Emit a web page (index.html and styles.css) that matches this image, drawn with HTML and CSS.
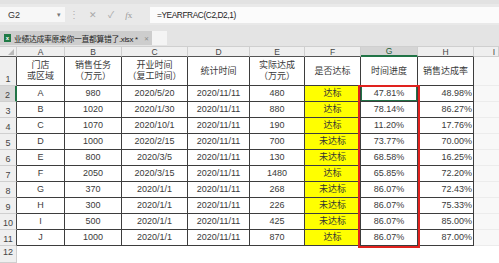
FILE: index.html
```html
<!DOCTYPE html>
<html lang="zh">
<head>
<meta charset="utf-8">
<title>业绩达成率</title>
<link rel="stylesheet" href="styles.css">
</head>
<body>
<div class="app">
  <div class="formula-row">
    <div class="namebox"><span class="nb-text">G2</span><span class="nb-arrow">▾</span></div>
    <div class="sep">⋮</div>
    <div class="fx-icons">
      <span class="ic">✕</span>
      <span class="ic">✓</span>
      <span class="ic fx"><i>f</i>x</span>
    </div>
    <div class="formula-input">=YEARFRAC(C2,D2,1)</div>
  </div>
  <div class="tabs">
    <div class="tab">
      <span class="xl-icon">x</span>
      <span class="tab-name">业绩达成率原来你一直都算错了.xlsx *</span>
      <span class="tab-close">✕</span>
    </div>
    <div class="newtab"></div>
  </div>

  <div class="sheet">
    <div class="corner"></div>
    <div class="ch">A</div><div class="ch">B</div><div class="ch">C</div><div class="ch">D</div><div class="ch">E</div><div class="ch">F</div><div class="ch ch-sel">G</div><div class="ch">H</div><div class="ch ch-out">I</div>

    <div class="rh">1</div>
    <div class="c hd">门店<br>或区域</div><div class="c hd">销售任务<br>（万元）</div><div class="c hd">开业时间<br>（复工时间）</div><div class="c hd">统计时间</div><div class="c hd">实际达成<br>（万元）</div><div class="c hd">是否达标</div><div class="c hd">时间进度</div><div class="c hd">销售达成率</div><div class="o"></div>

    <div class="rh rh-sel">2</div>
    <div class="c">A</div><div class="c">980</div><div class="c">2020/5/20</div><div class="c">2020/11/11</div><div class="c">480</div><div class="c y">达标</div><div class="c sel">47.81%</div><div class="c r">48.98%</div><div class="o"></div>

    <div class="rh">3</div>
    <div class="c">B</div><div class="c">1020</div><div class="c">2020/1/30</div><div class="c">2020/11/11</div><div class="c">880</div><div class="c y">达标</div><div class="c">78.14%</div><div class="c r">86.27%</div><div class="o"></div>

    <div class="rh">4</div>
    <div class="c">C</div><div class="c">1070</div><div class="c">2020/10/1</div><div class="c">2020/11/11</div><div class="c">190</div><div class="c y">达标</div><div class="c">11.20%</div><div class="c r">17.76%</div><div class="o"></div>

    <div class="rh">5</div>
    <div class="c">D</div><div class="c">1000</div><div class="c">2020/2/15</div><div class="c">2020/11/11</div><div class="c">700</div><div class="c y">未达标</div><div class="c">73.77%</div><div class="c r">70.00%</div><div class="o"></div>

    <div class="rh">6</div>
    <div class="c">E</div><div class="c">800</div><div class="c">2020/3/5</div><div class="c">2020/11/11</div><div class="c">130</div><div class="c y">未达标</div><div class="c">68.58%</div><div class="c r">16.25%</div><div class="o"></div>

    <div class="rh">7</div>
    <div class="c">F</div><div class="c">2050</div><div class="c">2020/3/15</div><div class="c">2020/11/11</div><div class="c">1480</div><div class="c y">达标</div><div class="c">65.85%</div><div class="c r">72.20%</div><div class="o"></div>

    <div class="rh">8</div>
    <div class="c">G</div><div class="c">370</div><div class="c">2020/1/1</div><div class="c">2020/11/11</div><div class="c">268</div><div class="c y">未达标</div><div class="c">86.07%</div><div class="c r">72.43%</div><div class="o"></div>

    <div class="rh">9</div>
    <div class="c">H</div><div class="c">300</div><div class="c">2020/1/1</div><div class="c">2020/11/11</div><div class="c">226</div><div class="c y">未达标</div><div class="c">86.07%</div><div class="c r">75.33%</div><div class="o"></div>

    <div class="rh">10</div>
    <div class="c">I</div><div class="c">500</div><div class="c">2020/1/1</div><div class="c">2020/11/11</div><div class="c">425</div><div class="c y">未达标</div><div class="c">86.07%</div><div class="c r">85.00%</div><div class="o"></div>

    <div class="rh">11</div>
    <div class="c">J</div><div class="c">1000</div><div class="c">2020/1/1</div><div class="c">2020/11/11</div><div class="c">870</div><div class="c y">达标</div><div class="c">86.07%</div><div class="c r">87.00%</div><div class="o"></div>

    <div class="rh rh-last">12</div>
    <div class="e"></div><div class="e"></div><div class="e"></div><div class="e"></div><div class="e"></div><div class="e"></div><div class="e"></div><div class="e"></div><div class="e"></div>

    <div class="annot"></div>
  </div>
</div>
</body>
</html>
```

FILE: styles.css
```css
html, body {
  margin: 0;
  padding: 0;
}
body {
  width: 499px;
  height: 263px;
  overflow: hidden;
  background: #e7e7e7;
  font-family: "Liberation Sans", "Noto Sans CJK SC", sans-serif;
  color: #3a3a3a;
}
.app {
  width: 499px;
  height: 263px;
  display: flex;
  flex-direction: column;
}

/* formula bar */
.formula-row {
  height: 25px;
  box-sizing: border-box;
  display: flex;
  align-items: flex-start;
  border-top: 4px solid #e2e2e2;
  padding-top: 3px;
  background: #e9e9e9;
}
.namebox {
  width: 65px;
  height: 15px;
  box-sizing: border-box;
  background: #f7f7f7;
  display: flex;
  align-items: center;
  justify-content: space-between;
  padding: 0 4px 0 8px;
  font-size: 9px;
  color: #333;
}
.nb-arrow {
  font-size: 7px;
  color: #777;
}
.sep {
  width: 18px;
  text-align: center;
  font-size: 10px;
  line-height: 15px;
  color: #b0b0b0;
}
.fx-icons {
  width: 67px;
  display: flex;
  align-items: center;
  height: 15px;
  padding-left: 6px;
  box-sizing: border-box;
  gap: 11px;
  color: #a8a8a8;
  font-size: 9px;
}
.fx-icons .fx {
  font-family: "Liberation Serif", serif;
  font-size: 9px;
  color: #9a9a9a;
}
.formula-input {
  flex: 1;
  height: 16px;
  background: #fbfbfb;
  font-size: 8.3px;
  letter-spacing: -0.4px;
  line-height: 16px;
  padding-left: 7px;
  color: #222;
}

/* tabs */
.tabs {
  height: 22px;
  box-sizing: border-box;
  display: flex;
  align-items: flex-end;
  padding-bottom: 1px;
  background: #e4e4e4;
  border-bottom: 1px solid #cfcfcf;
}
.tab {
  width: 152px;
  height: 14px;
  background: #cdcdcd;
  display: flex;
  align-items: center;
  padding-left: 4px;
  box-sizing: border-box;
  gap: 3px;
}
.xl-icon {
  flex: none;
  width: 7px;
  height: 8px;
  background: #1f7a45;
  color: #fff;
  font-size: 6px;
  line-height: 8px;
  text-align: center;
  font-weight: bold;
}
.tab-name {
  font-size: 7.8px;
  letter-spacing: -0.3px;
  color: #222;
  white-space: nowrap;
}
.tab-close {
  flex: none;
  font-size: 6px;
  color: #8a8a8a;
  margin-left: 3px;
}
.newtab {
  width: 15px;
  height: 14px;
  background: #f4f4f4;
}

/* sheet grid */
.sheet {
  position: relative;
  flex: 1;
  display: grid;
  grid-template-columns: 17px 48px 57px 66px 62px 55px 56px 57px 56px 1fr;
  grid-template-rows: 10px 29px repeat(10, 16px) 1fr;
  background: #fff;
  font-size: 9px;
}
.corner {
  background: #efefef;
  border-right: 1px solid #cfcfcf;
  border-bottom: 1px solid #555;
  position: relative;
}
.corner::after {
  content: "";
  position: absolute;
  right: 2px;
  bottom: 1px;
  border-left: 6px solid transparent;
  border-bottom: 6px solid #b9b9b9;
}
.ch {
  background: #efefef;
  border-right: 1px solid #cfcfcf;
  border-bottom: 1px solid #555;
  display: flex;
  align-items: center;
  justify-content: center;
  font-size: 8.5px;
  color: #444;
  line-height: 10px;
}
.ch-sel {
  background: #d5d5d5;
  border-bottom: 2px solid #217346;
  color: #1e5e38;
}
.ch-out {
  border-bottom: 1px solid #cfcfcf;
  justify-content: flex-end;
  padding-right: 3px;
}
.rh {
  background: #efefef;
  border-right: 1px solid #444;
  border-bottom: 1px solid #cfcfcf;
  display: flex;
  align-items: flex-end;
  justify-content: center;
  font-size: 9px;
  color: #444;
  line-height: 11px;
}
.rh-sel {
  background: #d8d8d8;
  border-right: 2px solid #217346;
}
.rh-last {
  border-right: 1px solid #cfcfcf;
  align-items: flex-start;
  padding-top: 1px;
}
.c {
  border-right: 1px solid #3d3d3d;
  border-bottom: 1px solid #3d3d3d;
  display: flex;
  align-items: center;
  justify-content: center;
  white-space: nowrap;
  color: #3a3a3a;
  line-height: 11px;
  text-align: center;
}
.c.hd {
  font-size: 9px;
  color: #3a3a3a;
}
.c.r {
  justify-content: flex-end;
  padding-right: 1px;
}
.c.y {
  background: #ffff00;
  color: #333;
}
.c.sel {
  box-shadow: inset 0 0 0 1px #217346;
}
.o {
  background: #f8f8f8;
  border-bottom: 1px solid #ececec;
}
.e {
  background: #fff;
}

/* red annotation box drawn over the sheet */
.annot {
  position: absolute;
  left: 358px;
  top: 38px;
  width: 62px;
  height: 163px;
  box-sizing: border-box;
  border: 2px solid #e0221e;
  pointer-events: none;
}
```
